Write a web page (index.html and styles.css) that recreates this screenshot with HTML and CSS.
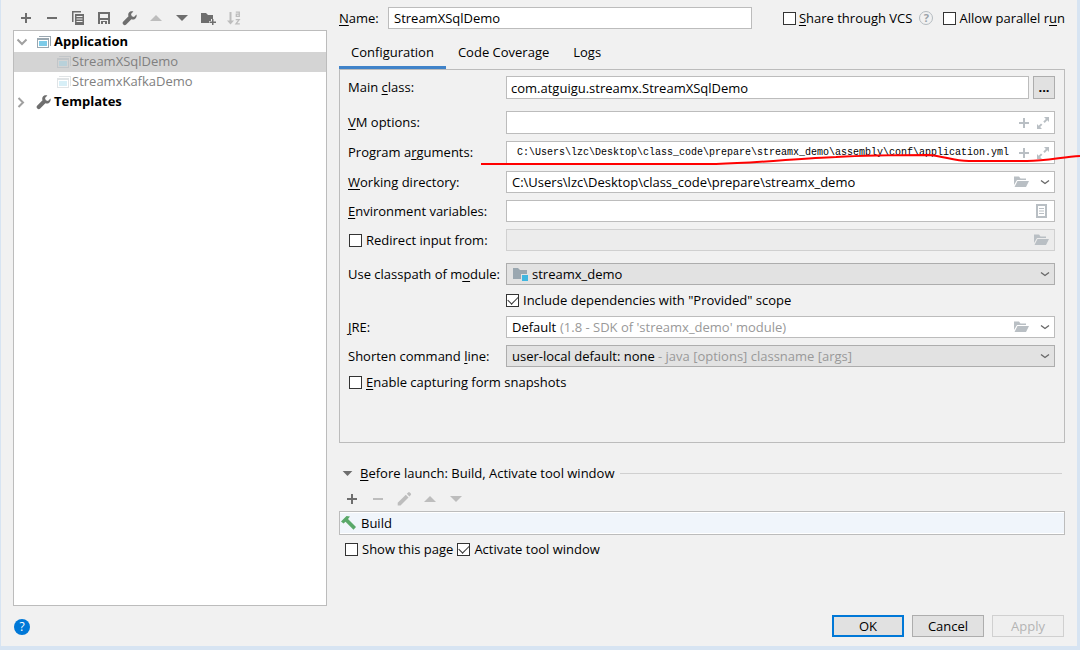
FILE: index.html
```html
<!DOCTYPE html>
<html lang="en">
<head>
<meta charset="utf-8">
<title>Run/Debug Configurations</title>
<link rel="stylesheet" href="styles.css">
</head>
<body>
<svg class="sprite" aria-hidden="true">
  <symbol id="plus" viewBox="0 0 16 16"><path d="M7 3h2v4h4v2H9v4H7V9H3V7h4z"/></symbol>
  <symbol id="minus" viewBox="0 0 16 16"><path d="M3 7h10v2H3z"/></symbol>
  <symbol id="copy" viewBox="0 0 16 16"><path fill-rule="evenodd" d="M2 1h9v1.500H3.500V12H2zM5 4h9v11H5zM6.500 6v1h6V6zm0 2.500v1h6v-1zm0 2.500v1h6v-1z"/></symbol>
  <symbol id="save" viewBox="0 0 16 16"><path fill-rule="evenodd" d="M2 2h12v12h-2v-4H4v4H2zM4 4v4h8V4zM5 11h6v3H9v-2H7v2H5z"/></symbol>
  <symbol id="wrench" viewBox="0 0 16 16"><path d="M14.400 4.600 12 7 9.800 6.200 9 4l2.400-2.400C9.800.900 8 1.300 7 2.600c-.900 1.100-1 2.500-.500 3.700L1.300 11.500a1.900 1.900 0 0 0 2.900 2.900l5.200-5.100c1.300.500 2.700.300 3.800-.600 1.300-1.100 1.800-2.700 1.200-4.100z"/></symbol>
  <symbol id="up" viewBox="0 0 16 16"><path d="M8 5l6 6H2z"/></symbol>
  <symbol id="down" viewBox="0 0 16 16"><path d="M2 5h12l-6 6z"/></symbol>
  <symbol id="newfolder" viewBox="0 0 16 16"><path d="M1 3h5l2 2h5v4h-2v2H9v2H1zM12 9h1.500v2.500H16V13h-2.500v2H12v-2H9.500v-1.500H12z"/></symbol>
  <symbol id="sort" viewBox="0 0 16 16"><path d="M3.500 2h2v8.500H8l-3.500 4-3.500-4h2.500z"/><path fill="none" stroke="currentColor" stroke-width="1.300" d="M9.800 2.200h3.500v4.200h-3v-2.200h3M9.700 9.600h3.500l-3.200 4.200h3.800"/></symbol>
  <symbol id="app" viewBox="0 0 16 16"><path fill="#9aa7b0" fill-rule="evenodd" d="M3 2h12v10h-1V3H3zM1 4h12v10H1zM2 6v7h10V6z"/><path fill="#7dcbe8" d="M3 7h8v5H3z"/></symbol>
  <symbol id="chevdown" viewBox="0 0 16 16"><path fill="none" stroke="currentColor" stroke-width="2" d="M3.500 5.500 8 10 12.500 5.500"/></symbol>
  <symbol id="chevright" viewBox="0 0 16 16"><path fill="none" stroke="currentColor" stroke-width="2" d="M4.500 4 9 8.500 4.500 13"/></symbol>
  <symbol id="arrow" viewBox="0 0 16 16"><path fill="none" stroke="currentColor" stroke-width="1.300" d="M4 6.500 8 9.500 12 6.500"/></symbol>
  <symbol id="expand" viewBox="0 0 16 16"><path d="M9 2h5v5l-1.700-1.700-2.600 2.600-1.400-1.400 2.600-2.600zM7 14H2V9l1.700 1.700 2.300-2.300 1.400 1.400-2.300 2.300z"/></symbol>
  <symbol id="folder" viewBox="0 0 16 16"><path d="M1 2.500h5l1.500 2H13V6H4L1 11zM4.500 7H16l-3 6H1.500z"/></symbol>
  <symbol id="doc" viewBox="0 0 16 16"><path fill-rule="evenodd" d="M3 1h11v14H3zM5 3v10h7V3z"/><path d="M6 5h5v1H6zM6 7.500h5v1H6zM6 10h5v1H6z"/></symbol>
  <symbol id="module" viewBox="0 0 16 16"><path fill="#9aa7b0" d="M1 2h5l2 2h7v4H9v5H1z"/><path fill="#40b6e0" d="M10 9h6v6h-6z"/></symbol>
  <symbol id="pencil" viewBox="0 0 16 16"><path d="M9.800 3.800l2.700 2.700L4.500 14.400H1.700v-2.600zM10.800 2.800l1.400-1.400q.8-.6 1.600.100l1 1q.7.800 0 1.600l-1.400 1.400z"/></symbol>
  <symbol id="hammer" viewBox="0 0 16 16"><path fill="#59a869" d="M0 6.500 5.500 1 9 1.500 7 4l8 8-2.500 2.800-8-8L2.500 8.500z"/></symbol>
</svg>
<div class="dialog">
  <div class="content">
    <aside class="sidebar">
      <div class="toolbar">
        <button class="tool" aria-label="Add"><svg><use href="#plus"/></svg></button>
        <button class="tool" aria-label="Remove"><svg><use href="#minus"/></svg></button>
        <button class="tool" aria-label="Copy"><svg><use href="#copy"/></svg></button>
        <button class="tool" aria-label="Save"><svg><use href="#save"/></svg></button>
        <button class="tool" aria-label="Edit templates"><svg><use href="#wrench"/></svg></button>
        <button class="tool" aria-label="Move up" disabled><svg><use href="#up"/></svg></button>
        <button class="tool" aria-label="Move down"><svg><use href="#down"/></svg></button>
        <button class="tool" aria-label="New folder"><svg><use href="#newfolder"/></svg></button>
        <button class="tool" aria-label="Sort" disabled><svg><use href="#sort"/></svg></button>
      </div>
      <ul class="tree">
        <li class="node group"><svg class="toggle"><use href="#chevdown"/></svg><svg><use href="#app"/></svg>Application</li>
        <li class="node leaf selected"><svg><use href="#app"/></svg>StreamXSqlDemo</li>
        <li class="node leaf"><svg><use href="#app"/></svg>StreamxKafkaDemo</li>
        <li class="node group"><svg class="toggle"><use href="#chevright"/></svg><svg><use href="#wrench"/></svg>Templates</li>
      </ul>
    </aside>
    <main class="editor">
      <div class="name-row">
        <label class="name-label" for="name"><u>N</u>ame:</label>
        <input class="text name-input" id="name" value="StreamXSqlDemo">
        <label class="check"><input type="checkbox"><span><u>S</u>hare through VCS</span></label>
        <button class="hint-button" aria-label="About sharing">?</button>
        <label class="check"><input type="checkbox"><span>Allow parallel r<u>u</u>n</span></label>
      </div>
      <div class="tabs" role="tablist">
        <button class="tab active" role="tab">Configuration</button>
        <button class="tab" role="tab">Code Coverage</button>
        <button class="tab" role="tab">Logs</button>
      </div>
      <div class="panel">
        <div class="row spaced-after">
          <label for="main">Main <u>c</u>lass:</label>
          <div class="pair"><input class="text" id="main" value="com.atguigu.streamx.StreamXSqlDemo"><button class="browse" aria-label="Browse">...</button></div>
        </div>
        <div class="row">
          <label for="vm"><u>V</u>M options:</label>
          <div class="field tall"><input id="vm"><button class="tool" aria-label="Insert macro"><svg><use href="#plus"/></svg></button><button class="tool" aria-label="Expand"><svg><use href="#expand"/></svg></button></div>
        </div>
        <div class="row">
          <label for="args">Program a<u>r</u>guments:</label>
          <div class="field tall marked"><input class="mono" id="args" value="C:\Users\lzc\Desktop\class_code\prepare\streamx_demo\assembly\conf\application.yml"><button class="tool" aria-label="Insert macro"><svg><use href="#plus"/></svg></button><button class="tool" aria-label="Expand"><svg><use href="#expand"/></svg></button>
            <svg class="marker" viewBox="0 0 599 14" preserveAspectRatio="none"><path d="M0 10H235C280 9 320 4 355 3C390 1 430 1 447 1C464 2 471 7 488 7H546C566 7 581 3 599 2"/></svg>
          </div>
        </div>
        <div class="row">
          <label for="cwd"><u>W</u>orking directory:</label>
          <div class="field listed"><input id="cwd" value="C:\Users\lzc\Desktop\class_code\prepare\streamx_demo"><button class="tool" aria-label="Browse"><svg><use href="#folder"/></svg></button><button class="tool" aria-label="Show list"><svg class="end"><use href="#arrow"/></svg></button></div>
        </div>
        <div class="row">
          <label for="env"><u>E</u>nvironment variables:</label>
          <div class="field single"><input id="env"><button class="tool" aria-label="Edit variables"><svg><use href="#doc"/></svg></button></div>
        </div>
        <div class="row spaced-after">
          <label class="check"><input type="checkbox"><span>Redirect input from:</span></label>
          <div class="field single disabled"><input aria-label="Redirect input from" disabled><button class="tool" aria-label="Browse" disabled><svg><use href="#folder"/></svg></button></div>
        </div>
        <div class="row">
          <label for="module-select">Use classpath of m<u>o</u>dule:</label>
          <div class="field listed combo"><svg><use href="#module"/></svg><select id="module-select"><option>streamx_demo</option></select><svg class="end"><use href="#arrow"/></svg></div>
        </div>
        <div class="row">
          <label class="check second"><input type="checkbox" checked><span>Include dependencies with "Provided" scope</span></label>
        </div>
        <div class="row">
          <label for="jre"><u>J</u>RE:</label>
          <div class="field listed"><select id="jre"><option>Default</option></select><span class="note">(1.8 - SDK of 'streamx_demo' module)</span><button class="tool" aria-label="Browse"><svg><use href="#folder"/></svg></button><button class="tool" aria-label="Show list"><svg class="end"><use href="#arrow"/></svg></button></div>
        </div>
        <div class="row">
          <label for="shorten">Shorten command <u>l</u>ine:</label>
          <div class="field listed combo"><select id="shorten"><option>user-local default: none</option></select><span class="note">- java [options] classname [args]</span><svg class="end"><use href="#arrow"/></svg></div>
        </div>
        <div class="row">
          <label class="check wide"><input type="checkbox"><span><u>E</u>nable capturing form snapshots</span></label>
        </div>
      </div>
      <section class="launch">
        <h2 class="launch-title"><svg><use href="#down"/></svg><span><u>B</u>efore launch: Build, Activate tool window</span></h2>
        <div class="toolbar">
          <button class="tool" aria-label="Add task"><svg><use href="#plus"/></svg></button>
          <button class="tool" aria-label="Remove task" disabled><svg><use href="#minus"/></svg></button>
          <button class="tool" aria-label="Edit task" disabled><svg><use href="#pencil"/></svg></button>
          <button class="tool" aria-label="Move task up" disabled><svg><use href="#up"/></svg></button>
          <button class="tool" aria-label="Move task down" disabled><svg><use href="#down"/></svg></button>
        </div>
        <ul class="tasks"><li><svg><use href="#hammer"/></svg>Build</li></ul>
        <div class="launch-checks">
          <label class="check"><input type="checkbox"><span>Show this page</span></label>
          <label class="check"><input type="checkbox" checked><span>Activate tool window</span></label>
        </div>
      </section>
    </main>
  </div>
  <footer class="footer">
    <button class="help" aria-label="Help">?</button>
    <button class="action primary">OK</button>
    <button class="action">Cancel</button>
    <button class="action" disabled>Apply</button>
  </footer>
</div>
</body>
</html>
```

FILE: styles.css
```css
* { box-sizing: border-box; }
body {
  margin: 0;
  background: #d7e4f2;
  color: #000;
  font: 13px/17px "Open Sans", "Noto Sans", sans-serif;
}
.sprite { position: absolute; width: 0; height: 0; }
svg { width: 16px; height: 16px; flex: none; fill: currentColor; color: #6e6e6e; }
button, input, select { font: inherit; color: inherit; margin: 0; padding: 0; border: 0; background: none; border-radius: 0; }
u { text-decoration-thickness: 1px; text-underline-offset: 2px; }
ul { list-style: none; margin: 0; padding: 0; }

.dialog {
  display: flex;
  flex-direction: column;
  min-height: calc(100vh - 4px);
  margin: 0 3px 4px 1px;
  padding: 7px 12px 9px;
  background: #f1f1f1;
}
.content { display: grid; grid-template-columns: 314px minmax(0, 1fr); gap: 12px; flex: 1; }
.sidebar { display: flex; flex-direction: column; }
.toolbar { display: flex; gap: 10px; }
.sidebar .toolbar { padding: 3px 5px 4px; }
.tool { display: flex; }
.tool:disabled svg { color: #bdbdbd; }

.tree { flex: 1; padding-top: 1px; border: 1px solid #bcbcbc; background: #fff; }
.node { display: flex; align-items: center; height: 20px; padding-bottom: 1px; }
.group { font-weight: 700; gap: 2px; }
.group .toggle { color: #a0a0a0; margin-right: 4px; }
.leaf { padding-left: 42px; color: #808080; }
.leaf svg { opacity: .3; }
.selected { background: #d4d4d4; }

.name-row { display: flex; align-items: center; }
.name-label { width: 49px; }
.text { min-width: 0; height: 22px; padding: 0 5px; border: 1px solid #bcbcbc; background: #fff; }
.name-input { flex: 1; margin-right: 31px; }
.check { display: flex; align-items: center; gap: 4px; white-space: nowrap; }
.check input {
  appearance: none;
  display: grid;
  place-items: center;
  flex: none;
  width: 13px;
  height: 13px;
  border: 1px solid #333;
  background: #fff;
}
.check input:checked::before {
  content: "";
  width: 9px;
  height: 5px;
  margin-bottom: 3px;
  border: solid #333;
  border-width: 0 0 1px 1px;
  rotate: -45deg;
}
.name-row .check { gap: 3px; }
.hint-button { width: 14px; height: 14px; margin: 0 10px 0 7px; border: 1px solid #b4bbc0; border-radius: 50%; color: #9aa2a8; font-size: 11px; line-height: 12px; font-weight: 700; }

.tabs { display: flex; margin-top: 8px; }
.tab { height: 32px; padding: 2px 12px 0; border-bottom: 3px solid transparent; }
.active { border-color: #4083c9; }
.panel {
  display: flex;
  flex-direction: column;
  gap: 7px;
  padding: 6px 9px 51px 8px;
  border: 1px solid #bcbcbc;
}
.row { display: grid; grid-template-columns: 158px minmax(0, 1fr); align-items: center; }
.row > .check { padding-left: 1px; }
.row > .second { grid-column: 2; padding-left: 0; }
.row > .wide { grid-column: 1 / -1; }
.spaced-after { margin-bottom: 5px; }
.pair { display: flex; gap: 4px; }
.pair .text { flex: 1; height: 23px; padding: 0 4px; }
.browse { width: 22px; border: 1px solid #adadad; background: #e1e1e1; font-weight: 700; }
.field { display: flex; align-items: center; height: 22px; padding: 0 3px 0 5px; border: 1px solid #bcbcbc; background: #fff; }
.field input { flex: 1; min-width: 0; }
.field .tool svg { color: #b9bfc4; }
.field .tool + .tool { margin-left: 3px; }
.field .end, .field .tool .end { color: #666; }
.tall { height: 23px; }
.single { padding-right: 5px; }
.listed { padding-right: 1px; }
.listed .tool + .tool { margin-left: 8px; }
.disabled { border-color: #d0d0d0; background: #ececec; }
.combo { border-color: #adadad; background: #e2e2e2; }
.combo > svg:first-child { margin-right: 4px; }
.end { margin-left: auto; }
.field select { appearance: none; }
.note { color: #999; margin: 0 auto 0 3px; white-space: nowrap; }
.mono { padding-left: 5px; font: 10px/13px "Liberation Mono", monospace; }
.marked { position: relative; }
.marker { position: absolute; left: -26px; top: 12px; width: calc(100% + 52px); height: 14px; fill: none; stroke: #f00; stroke-width: 2px; overflow: visible; }

.launch-title { display: flex; align-items: center; height: 20px; margin: 20px 3px 8px 0; font: inherit; }
.launch-title svg { width: 13px; height: 13px; margin: 0 6px 0 2px; }
.launch-title::after { content: ""; flex: 1; margin-left: 6px; border-top: 1px solid #d0d0d0; }
.launch .toolbar { padding-left: 5px; }
.tasks { margin-top: 4px; padding: 1px 0; border: 1px solid #bcbcbc; background: #fff; }
.tasks li { display: flex; align-items: center; gap: 4px; height: 20px; padding-left: 1px; background: #f0f5fb; }
.launch-checks { display: flex; gap: 4px; margin: 6px 6px 0; }

.footer { display: flex; align-items: center; gap: 8px; margin-top: 9px; }
.help { width: 16px; height: 16px; margin: 1px auto 0 1px; border-radius: 50%; background: #0078d7; color: #fff; font-size: 12px; line-height: 16px; }
.action { width: 72px; height: 22px; border: 1px solid #adadad; background: #e1e1e1; }
.action:last-child { margin-right: 1px; }
.primary { border: 2px solid #0078d7; }
.action:disabled { border-color: #d0d0d0; background: #efefef; color: #b4b4b4; }
```
